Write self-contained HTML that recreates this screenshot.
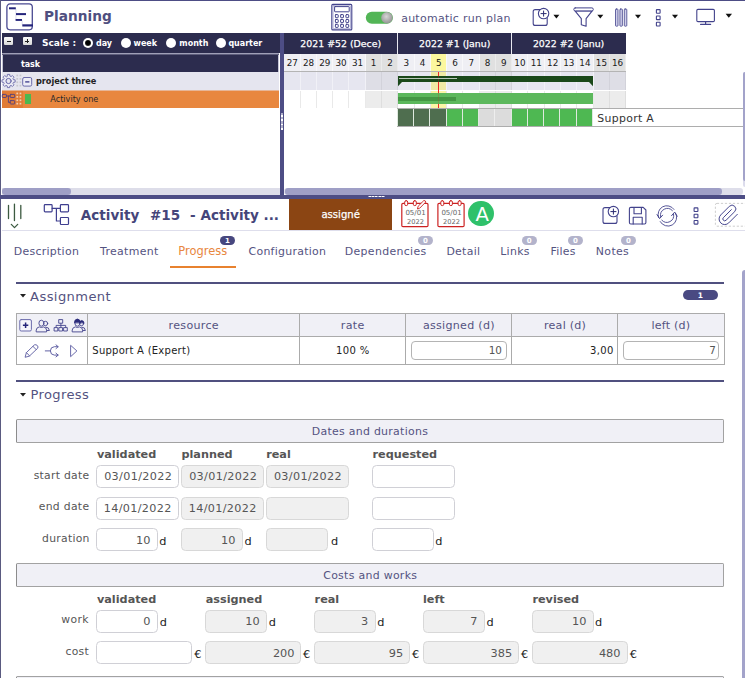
<!DOCTYPE html>
<html><head><meta charset="utf-8"><title>Planning</title>
<style>
html,body{margin:0;padding:0;}
body{width:745px;height:678px;overflow:hidden;position:relative;background:#fff;font-family:"DejaVu Sans","Liberation Sans",sans-serif;}
.a{position:absolute;}
.t{position:absolute;white-space:nowrap;line-height:1;}
svg{position:absolute;overflow:visible;}
</style></head><body>
<div class="a" style="left:0.00px;top:0.00px;width:745.00px;height:1.20px;background:#4d4d85;"></div>
<div class="a" style="left:0.00px;top:0.00px;width:1.30px;height:678.00px;background:#5a5a80;"></div>
<div class="a" style="left:2.00px;top:33.00px;width:278.00px;height:22.00px;background:#2c2c4e;"></div>
<div class="a" style="left:279.00px;top:53.00px;width:1.00px;height:56.00px;background:#fff;"></div>
<div class="a" style="left:2.00px;top:55.00px;width:277.00px;height:17.00px;background:#2c2c4e;"></div>
<div class="a" style="left:2.00px;top:53.00px;width:277.00px;height:1.00px;background:#a0a0b8;"></div>
<div class="a" style="left:2.00px;top:54.00px;width:277.00px;height:1.00px;background:#5e5e7c;"></div>
<div class="a" style="left:2.00px;top:55.00px;width:1.00px;height:17.00px;background:#c4c4d6;"></div>
<div class="a" style="left:278.00px;top:55.00px;width:1.00px;height:17.00px;background:#c4c4d6;"></div>
<div class="a" style="left:2.00px;top:72.00px;width:277.00px;height:19.00px;background:#e5e5ef;"></div>
<div class="a" style="left:2.00px;top:90.00px;width:277.00px;height:1.00px;background:#e7b697;"></div>
<div class="a" style="left:2.00px;top:91.00px;width:277.00px;height:17.00px;background:#e8873f;"></div>
<div class="a" style="left:2.00px;top:90.00px;width:21.00px;height:1.00px;background:#e3b193;"></div>
<div class="a" style="left:2.00px;top:91.00px;width:21.00px;height:17.00px;background:#e17c36;"></div>
<div class="a" style="left:24.80px;top:94.00px;width:6.70px;height:9.80px;background:#4cb850;"></div>
<div class="a" style="left:4.00px;top:36.90px;width:9.30px;height:8.20px;background:linear-gradient(#fbfbfb,#d9d9d9);border-radius:1px;"></div>
<div class="a" style="left:6.50px;top:40.50px;width:4.20px;height:1.10px;background:#222;"></div>
<div class="a" style="left:22.60px;top:36.90px;width:9.30px;height:8.20px;background:linear-gradient(#fbfbfb,#d9d9d9);border-radius:1px;"></div>
<div class="a" style="left:25.10px;top:40.50px;width:4.20px;height:1.10px;background:#222;"></div>
<div class="a" style="left:26.65px;top:38.90px;width:1.10px;height:4.30px;background:#222;"></div>
<div class="a" style="left:83.40px;top:37.7px;width:10px;height:10px;border-radius:50%;background:#fff;"></div>
<div class="a" style="left:85.30px;top:39.6px;width:6.2px;height:6.2px;border-radius:50%;background:radial-gradient(circle at 50% 45%,#000 40%,#555 100%);"></div>
<div class="a" style="left:121.00px;top:37.7px;width:10px;height:10px;border-radius:50%;background:#fff;"></div>
<div class="a" style="left:165.80px;top:37.7px;width:10px;height:10px;border-radius:50%;background:#fff;"></div>
<div class="a" style="left:216.00px;top:37.7px;width:10px;height:10px;border-radius:50%;background:#fff;"></div>
<div class="a" style="left:280.00px;top:32.90px;width:4.20px;height:162.00px;background:#4d4d85;"></div>
<div class="a" style="left:281.00px;top:113.20px;width:1.60px;height:16.80px;background:rgba(255,255,255,0.55);"></div>
<div class="a" style="left:281.00px;top:115.00px;width:1.60px;height:1.90px;background:#fff;"></div>
<div class="a" style="left:281.00px;top:119.30px;width:1.60px;height:1.90px;background:#fff;"></div>
<div class="a" style="left:281.00px;top:123.60px;width:1.60px;height:1.90px;background:#fff;"></div>
<div class="a" style="left:281.00px;top:127.90px;width:1.60px;height:1.90px;background:#fff;"></div>
<div class="a" style="left:283.90px;top:32.90px;width:341.90px;height:20.90px;background:#2c2c4e;"></div>
<div class="a" style="left:397.39px;top:32.90px;width:0.90px;height:20.90px;background:#e8e8f0;"></div>
<div class="a" style="left:511.28px;top:32.90px;width:0.90px;height:20.90px;background:#e8e8f0;"></div>
<div class="a" style="left:283.90px;top:53.70px;width:16.57px;height:17.80px;background:#efeff4;"></div>
<div class="a" style="left:283.90px;top:71.30px;width:16.57px;height:19.20px;background:#e6e6f0;"></div>
<div class="a" style="left:283.90px;top:90.50px;width:16.57px;height:17.70px;background:#fff;"></div>
<div class="a" style="left:300.17px;top:53.70px;width:16.57px;height:17.80px;background:#efeff4;"></div>
<div class="a" style="left:300.17px;top:71.30px;width:16.57px;height:19.20px;background:#e6e6f0;"></div>
<div class="a" style="left:300.17px;top:90.50px;width:16.57px;height:17.70px;background:#fff;"></div>
<div class="a" style="left:316.44px;top:53.70px;width:16.57px;height:17.80px;background:#efeff4;"></div>
<div class="a" style="left:316.44px;top:71.30px;width:16.57px;height:19.20px;background:#e6e6f0;"></div>
<div class="a" style="left:316.44px;top:90.50px;width:16.57px;height:17.70px;background:#fff;"></div>
<div class="a" style="left:332.71px;top:53.70px;width:16.57px;height:17.80px;background:#efeff4;"></div>
<div class="a" style="left:332.71px;top:71.30px;width:16.57px;height:19.20px;background:#e6e6f0;"></div>
<div class="a" style="left:332.71px;top:90.50px;width:16.57px;height:17.70px;background:#fff;"></div>
<div class="a" style="left:348.98px;top:53.70px;width:16.57px;height:17.80px;background:#efeff4;"></div>
<div class="a" style="left:348.98px;top:71.30px;width:16.57px;height:19.20px;background:#e6e6f0;"></div>
<div class="a" style="left:348.98px;top:90.50px;width:16.57px;height:17.70px;background:#fff;"></div>
<div class="a" style="left:365.25px;top:53.70px;width:16.57px;height:17.80px;background:#e0e0e0;"></div>
<div class="a" style="left:365.25px;top:71.30px;width:16.57px;height:19.20px;background:#dedee6;"></div>
<div class="a" style="left:365.25px;top:90.50px;width:16.57px;height:17.70px;background:#ececec;"></div>
<div class="a" style="left:381.52px;top:53.70px;width:16.57px;height:17.80px;background:#e0e0e0;"></div>
<div class="a" style="left:381.52px;top:71.30px;width:16.57px;height:19.20px;background:#dedee6;"></div>
<div class="a" style="left:381.52px;top:90.50px;width:16.57px;height:17.70px;background:#ececec;"></div>
<div class="a" style="left:397.79px;top:53.70px;width:16.57px;height:17.80px;background:#efeff4;"></div>
<div class="a" style="left:397.79px;top:71.30px;width:16.57px;height:19.20px;background:#e6e6f0;"></div>
<div class="a" style="left:397.79px;top:90.50px;width:16.57px;height:17.70px;background:#fff;"></div>
<div class="a" style="left:414.06px;top:53.70px;width:16.57px;height:17.80px;background:#efeff4;"></div>
<div class="a" style="left:414.06px;top:71.30px;width:16.57px;height:19.20px;background:#e6e6f0;"></div>
<div class="a" style="left:414.06px;top:90.50px;width:16.57px;height:17.70px;background:#fff;"></div>
<div class="a" style="left:430.33px;top:53.70px;width:16.57px;height:17.80px;background:#fcf79e;"></div>
<div class="a" style="left:430.33px;top:71.30px;width:16.57px;height:19.20px;background:#f0eaa4;"></div>
<div class="a" style="left:430.33px;top:90.50px;width:16.57px;height:17.70px;background:#fbf5a6;"></div>
<div class="a" style="left:446.60px;top:53.70px;width:16.57px;height:17.80px;background:#efeff4;"></div>
<div class="a" style="left:446.60px;top:71.30px;width:16.57px;height:19.20px;background:#e6e6f0;"></div>
<div class="a" style="left:446.60px;top:90.50px;width:16.57px;height:17.70px;background:#fff;"></div>
<div class="a" style="left:462.87px;top:53.70px;width:16.57px;height:17.80px;background:#efeff4;"></div>
<div class="a" style="left:462.87px;top:71.30px;width:16.57px;height:19.20px;background:#e6e6f0;"></div>
<div class="a" style="left:462.87px;top:90.50px;width:16.57px;height:17.70px;background:#fff;"></div>
<div class="a" style="left:479.14px;top:53.70px;width:16.57px;height:17.80px;background:#e0e0e0;"></div>
<div class="a" style="left:479.14px;top:71.30px;width:16.57px;height:19.20px;background:#dedee6;"></div>
<div class="a" style="left:479.14px;top:90.50px;width:16.57px;height:17.70px;background:#ececec;"></div>
<div class="a" style="left:495.41px;top:53.70px;width:16.57px;height:17.80px;background:#e0e0e0;"></div>
<div class="a" style="left:495.41px;top:71.30px;width:16.57px;height:19.20px;background:#dedee6;"></div>
<div class="a" style="left:495.41px;top:90.50px;width:16.57px;height:17.70px;background:#ececec;"></div>
<div class="a" style="left:511.68px;top:53.70px;width:16.57px;height:17.80px;background:#efeff4;"></div>
<div class="a" style="left:511.68px;top:71.30px;width:16.57px;height:19.20px;background:#e6e6f0;"></div>
<div class="a" style="left:511.68px;top:90.50px;width:16.57px;height:17.70px;background:#fff;"></div>
<div class="a" style="left:527.95px;top:53.70px;width:16.57px;height:17.80px;background:#efeff4;"></div>
<div class="a" style="left:527.95px;top:71.30px;width:16.57px;height:19.20px;background:#e6e6f0;"></div>
<div class="a" style="left:527.95px;top:90.50px;width:16.57px;height:17.70px;background:#fff;"></div>
<div class="a" style="left:544.22px;top:53.70px;width:16.57px;height:17.80px;background:#efeff4;"></div>
<div class="a" style="left:544.22px;top:71.30px;width:16.57px;height:19.20px;background:#e6e6f0;"></div>
<div class="a" style="left:544.22px;top:90.50px;width:16.57px;height:17.70px;background:#fff;"></div>
<div class="a" style="left:560.49px;top:53.70px;width:16.57px;height:17.80px;background:#efeff4;"></div>
<div class="a" style="left:560.49px;top:71.30px;width:16.57px;height:19.20px;background:#e6e6f0;"></div>
<div class="a" style="left:560.49px;top:90.50px;width:16.57px;height:17.70px;background:#fff;"></div>
<div class="a" style="left:576.76px;top:53.70px;width:16.57px;height:17.80px;background:#efeff4;"></div>
<div class="a" style="left:576.76px;top:71.30px;width:16.57px;height:19.20px;background:#e6e6f0;"></div>
<div class="a" style="left:576.76px;top:90.50px;width:16.57px;height:17.70px;background:#fff;"></div>
<div class="a" style="left:593.03px;top:53.70px;width:16.57px;height:17.80px;background:#e0e0e0;"></div>
<div class="a" style="left:593.03px;top:71.30px;width:16.57px;height:19.20px;background:#dedee6;"></div>
<div class="a" style="left:593.03px;top:90.50px;width:16.57px;height:17.70px;background:#ececec;"></div>
<div class="a" style="left:609.30px;top:53.70px;width:16.57px;height:17.80px;background:#e0e0e0;"></div>
<div class="a" style="left:609.30px;top:71.30px;width:16.57px;height:19.20px;background:#dedee6;"></div>
<div class="a" style="left:609.30px;top:90.50px;width:16.57px;height:17.70px;background:#ececec;"></div>
<div class="a" style="left:625.80px;top:53.00px;width:3.00px;height:56.00px;background:#fff;"></div>
<div class="a" style="left:300.00px;top:53.70px;width:1.00px;height:17.60px;background:#f8f8fa;"></div>
<div class="a" style="left:300.00px;top:71.30px;width:1.00px;height:19.20px;background:#f1f1f7;"></div>
<div class="a" style="left:300.00px;top:90.50px;width:1.00px;height:17.70px;background:#e9e9e9;"></div>
<div class="a" style="left:316.00px;top:53.70px;width:1.00px;height:17.60px;background:#f8f8fa;"></div>
<div class="a" style="left:316.00px;top:71.30px;width:1.00px;height:19.20px;background:#f1f1f7;"></div>
<div class="a" style="left:316.00px;top:90.50px;width:1.00px;height:17.70px;background:#e9e9e9;"></div>
<div class="a" style="left:332.00px;top:53.70px;width:1.00px;height:17.60px;background:#f8f8fa;"></div>
<div class="a" style="left:332.00px;top:71.30px;width:1.00px;height:19.20px;background:#f1f1f7;"></div>
<div class="a" style="left:332.00px;top:90.50px;width:1.00px;height:17.70px;background:#e9e9e9;"></div>
<div class="a" style="left:348.00px;top:53.70px;width:1.00px;height:17.60px;background:#f8f8fa;"></div>
<div class="a" style="left:348.00px;top:71.30px;width:1.00px;height:19.20px;background:#f1f1f7;"></div>
<div class="a" style="left:348.00px;top:90.50px;width:1.00px;height:17.70px;background:#e9e9e9;"></div>
<div class="a" style="left:365.00px;top:53.70px;width:1.00px;height:17.60px;background:#f8f8fa;"></div>
<div class="a" style="left:365.00px;top:71.30px;width:1.00px;height:19.20px;background:#f1f1f7;"></div>
<div class="a" style="left:365.00px;top:90.50px;width:1.00px;height:17.70px;background:#e9e9e9;"></div>
<div class="a" style="left:381.00px;top:53.70px;width:1.00px;height:17.60px;background:#ebebeb;"></div>
<div class="a" style="left:381.00px;top:71.30px;width:1.00px;height:19.20px;background:#d2d2da;"></div>
<div class="a" style="left:381.00px;top:90.50px;width:1.00px;height:17.70px;background:#dedede;"></div>
<div class="a" style="left:397.00px;top:53.70px;width:1.00px;height:17.60px;background:#ebebeb;"></div>
<div class="a" style="left:397.00px;top:71.30px;width:1.00px;height:19.20px;background:#d2d2da;"></div>
<div class="a" style="left:397.00px;top:90.50px;width:1.00px;height:17.70px;background:#dedede;"></div>
<div class="a" style="left:414.00px;top:53.70px;width:1.00px;height:17.60px;background:#f8f8fa;"></div>
<div class="a" style="left:414.00px;top:71.30px;width:1.00px;height:19.20px;background:#f1f1f7;"></div>
<div class="a" style="left:414.00px;top:90.50px;width:1.00px;height:17.70px;background:#e9e9e9;"></div>
<div class="a" style="left:430.00px;top:53.70px;width:1.00px;height:17.60px;background:#f8f8fa;"></div>
<div class="a" style="left:430.00px;top:71.30px;width:1.00px;height:19.20px;background:#f1f1f7;"></div>
<div class="a" style="left:430.00px;top:90.50px;width:1.00px;height:17.70px;background:#e9e9e9;"></div>
<div class="a" style="left:446.00px;top:53.70px;width:1.00px;height:17.60px;background:#f8f8fa;"></div>
<div class="a" style="left:446.00px;top:71.30px;width:1.00px;height:19.20px;background:#f1f1f7;"></div>
<div class="a" style="left:446.00px;top:90.50px;width:1.00px;height:17.70px;background:#e9e9e9;"></div>
<div class="a" style="left:462.00px;top:53.70px;width:1.00px;height:17.60px;background:#f8f8fa;"></div>
<div class="a" style="left:462.00px;top:71.30px;width:1.00px;height:19.20px;background:#f1f1f7;"></div>
<div class="a" style="left:462.00px;top:90.50px;width:1.00px;height:17.70px;background:#e9e9e9;"></div>
<div class="a" style="left:479.00px;top:53.70px;width:1.00px;height:17.60px;background:#f8f8fa;"></div>
<div class="a" style="left:479.00px;top:71.30px;width:1.00px;height:19.20px;background:#f1f1f7;"></div>
<div class="a" style="left:479.00px;top:90.50px;width:1.00px;height:17.70px;background:#e9e9e9;"></div>
<div class="a" style="left:495.00px;top:53.70px;width:1.00px;height:17.60px;background:#ebebeb;"></div>
<div class="a" style="left:495.00px;top:71.30px;width:1.00px;height:19.20px;background:#d2d2da;"></div>
<div class="a" style="left:495.00px;top:90.50px;width:1.00px;height:17.70px;background:#dedede;"></div>
<div class="a" style="left:511.00px;top:53.70px;width:1.00px;height:17.60px;background:#ebebeb;"></div>
<div class="a" style="left:511.00px;top:71.30px;width:1.00px;height:19.20px;background:#d2d2da;"></div>
<div class="a" style="left:511.00px;top:90.50px;width:1.00px;height:17.70px;background:#dedede;"></div>
<div class="a" style="left:527.00px;top:53.70px;width:1.00px;height:17.60px;background:#f8f8fa;"></div>
<div class="a" style="left:527.00px;top:71.30px;width:1.00px;height:19.20px;background:#f1f1f7;"></div>
<div class="a" style="left:527.00px;top:90.50px;width:1.00px;height:17.70px;background:#e9e9e9;"></div>
<div class="a" style="left:544.00px;top:53.70px;width:1.00px;height:17.60px;background:#f8f8fa;"></div>
<div class="a" style="left:544.00px;top:71.30px;width:1.00px;height:19.20px;background:#f1f1f7;"></div>
<div class="a" style="left:544.00px;top:90.50px;width:1.00px;height:17.70px;background:#e9e9e9;"></div>
<div class="a" style="left:560.00px;top:53.70px;width:1.00px;height:17.60px;background:#f8f8fa;"></div>
<div class="a" style="left:560.00px;top:71.30px;width:1.00px;height:19.20px;background:#f1f1f7;"></div>
<div class="a" style="left:560.00px;top:90.50px;width:1.00px;height:17.70px;background:#e9e9e9;"></div>
<div class="a" style="left:576.00px;top:53.70px;width:1.00px;height:17.60px;background:#f8f8fa;"></div>
<div class="a" style="left:576.00px;top:71.30px;width:1.00px;height:19.20px;background:#f1f1f7;"></div>
<div class="a" style="left:576.00px;top:90.50px;width:1.00px;height:17.70px;background:#e9e9e9;"></div>
<div class="a" style="left:593.00px;top:53.70px;width:1.00px;height:17.60px;background:#f8f8fa;"></div>
<div class="a" style="left:593.00px;top:71.30px;width:1.00px;height:19.20px;background:#f1f1f7;"></div>
<div class="a" style="left:593.00px;top:90.50px;width:1.00px;height:17.70px;background:#e9e9e9;"></div>
<div class="a" style="left:609.00px;top:53.70px;width:1.00px;height:17.60px;background:#ebebeb;"></div>
<div class="a" style="left:609.00px;top:71.30px;width:1.00px;height:19.20px;background:#d2d2da;"></div>
<div class="a" style="left:609.00px;top:90.50px;width:1.00px;height:17.70px;background:#dedede;"></div>
<div class="a" style="left:625.00px;top:53.70px;width:1.00px;height:17.60px;background:#ebebeb;"></div>
<div class="a" style="left:625.00px;top:71.30px;width:1.00px;height:19.20px;background:#d2d2da;"></div>
<div class="a" style="left:625.00px;top:90.50px;width:1.00px;height:17.70px;background:#dedede;"></div>
<div class="a" style="left:283.90px;top:71.10px;width:341.90px;height:0.90px;background:#b4b4b4;"></div>
<div class="a" style="left:438.10px;top:71.60px;width:1.10px;height:36.40px;background:#ee2a2a;"></div>
<div class="a" style="left:398.00px;top:76.00px;width:195.20px;height:5.90px;background:#1a481a;"></div>
<div class="a" style="left:438.10px;top:76.00px;width:1.10px;height:5.90px;background:rgba(238,42,42,0.22);"></div>
<svg class="a" style="left:398px;top:81.5px" width="4" height="4.2" viewBox="0 0 4 4.2"><path d="M0 0H4L0 4.2Z" fill="#1a481a"/></svg>
<svg class="a" style="left:589.2px;top:81.5px" width="4" height="4.2" viewBox="0 0 4 4.2"><path d="M0 0H4V4.2Z" fill="#1a481a"/></svg>
<div class="a" style="left:399.20px;top:77.80px;width:57.80px;height:1.30px;background:#b9c7b9;"></div>
<div class="a" style="left:398.00px;top:93.30px;width:195.20px;height:10.50px;background:#5cb85c;"></div>
<div class="a" style="left:398.30px;top:97.20px;width:58.00px;height:3.80px;background:rgba(40,110,40,0.45);"></div>
<div class="a" style="left:438.10px;top:93.30px;width:1.10px;height:10.50px;background:rgba(200,60,40,0.22);"></div>
<div class="a" style="left:397.30px;top:108.20px;width:345.70px;height:1.30px;background:#adadad;"></div>
<div class="a" style="left:397.30px;top:125.90px;width:345.70px;height:1.30px;background:#adadad;"></div>
<div class="a" style="left:397.19px;top:109.30px;width:16.47px;height:16.80px;background:#dfe9df;"></div>
<div class="a" style="left:397.79px;top:109.30px;width:15.27px;height:16.80px;background:#4f6e4f;"></div>
<div class="a" style="left:413.46px;top:109.30px;width:16.47px;height:16.80px;background:#dfe9df;"></div>
<div class="a" style="left:414.06px;top:109.30px;width:15.27px;height:16.80px;background:#4f6e4f;"></div>
<div class="a" style="left:429.73px;top:109.30px;width:16.47px;height:16.80px;background:#dfe9df;"></div>
<div class="a" style="left:430.33px;top:109.30px;width:15.27px;height:16.80px;background:#4f6e4f;"></div>
<div class="a" style="left:446.00px;top:109.30px;width:16.47px;height:16.80px;background:#dfe9df;"></div>
<div class="a" style="left:446.60px;top:109.30px;width:15.27px;height:16.80px;background:#4eb852;"></div>
<div class="a" style="left:462.27px;top:109.30px;width:16.47px;height:16.80px;background:#dfe9df;"></div>
<div class="a" style="left:462.87px;top:109.30px;width:15.27px;height:16.80px;background:#4eb852;"></div>
<div class="a" style="left:478.54px;top:109.30px;width:16.47px;height:16.80px;background:#eee;"></div>
<div class="a" style="left:479.14px;top:109.30px;width:15.27px;height:16.80px;background:#dcdcdc;"></div>
<div class="a" style="left:494.81px;top:109.30px;width:16.47px;height:16.80px;background:#eee;"></div>
<div class="a" style="left:495.41px;top:109.30px;width:15.27px;height:16.80px;background:#dcdcdc;"></div>
<div class="a" style="left:511.08px;top:109.30px;width:16.47px;height:16.80px;background:#dfe9df;"></div>
<div class="a" style="left:511.68px;top:109.30px;width:15.27px;height:16.80px;background:#4eb852;"></div>
<div class="a" style="left:527.35px;top:109.30px;width:16.47px;height:16.80px;background:#dfe9df;"></div>
<div class="a" style="left:527.95px;top:109.30px;width:15.27px;height:16.80px;background:#4eb852;"></div>
<div class="a" style="left:543.62px;top:109.30px;width:16.47px;height:16.80px;background:#dfe9df;"></div>
<div class="a" style="left:544.22px;top:109.30px;width:15.27px;height:16.80px;background:#4eb852;"></div>
<div class="a" style="left:559.89px;top:109.30px;width:16.47px;height:16.80px;background:#dfe9df;"></div>
<div class="a" style="left:560.49px;top:109.30px;width:15.27px;height:16.80px;background:#4eb852;"></div>
<div class="a" style="left:576.16px;top:109.30px;width:16.47px;height:16.80px;background:#dfe9df;"></div>
<div class="a" style="left:576.76px;top:109.30px;width:15.27px;height:16.80px;background:#4eb852;"></div>
<div class="a" style="left:1.80px;top:188.00px;width:278.20px;height:6.50px;background:#dddde9;"></div>
<div class="a" style="left:2.00px;top:188.00px;width:68.80px;height:6.50px;background:#9f9fc6;border-radius:3.2px;"></div>
<div class="a" style="left:283.90px;top:188.00px;width:459.10px;height:6.50px;background:#dedeea;border-radius:3.2px;"></div>
<div class="a" style="left:285.20px;top:188.00px;width:436.50px;height:6.50px;background:#9f9fc6;border-radius:3.2px;"></div>
<div class="a" style="left:743.10px;top:72.40px;width:2.00px;height:115.00px;background:#dcdcec;border-radius:2px 0 0 2px;"></div>
<div class="a" style="left:743.10px;top:72.40px;width:2.00px;height:108.60px;background:#a3a3ca;border-radius:2px 0 0 2px;"></div>
<div class="a" style="left:0.00px;top:194.70px;width:745.00px;height:4.10px;background:#4d4d85;"></div>
<div class="a" style="left:368.00px;top:196.10px;width:16.80px;height:1.40px;background:rgba(255,255,255,0.5);"></div>
<div class="a" style="left:368.60px;top:196.10px;width:2.10px;height:1.40px;background:#fff;"></div>
<div class="a" style="left:372.00px;top:196.10px;width:2.10px;height:1.40px;background:#fff;"></div>
<div class="a" style="left:375.40px;top:196.10px;width:2.10px;height:1.40px;background:#fff;"></div>
<div class="a" style="left:378.80px;top:196.10px;width:2.10px;height:1.40px;background:#fff;"></div>
<div class="a" style="left:382.20px;top:196.10px;width:2.10px;height:1.40px;background:#fff;"></div>
<div class="a" style="left:1.80px;top:230.20px;width:743.20px;height:0.90px;background:#dedeec;"></div>
<div class="a" style="left:289.40px;top:198.80px;width:102.60px;height:30.80px;background:#8b4513;"></div>
<div class="a" style="left:468.3px;top:200.8px;width:25.7px;height:25.7px;border-radius:50%;background:#2fc16a;"></div>
<div class="a" style="left:170.00px;top:266.20px;width:66.10px;height:1.80px;background:#e8822f;"></div>
<div class="a" style="left:220.10px;top:236.10px;width:15.20px;height:9.30px;background:#47477f;border-radius:4.65px;"></div>
<div class="a" style="left:417.80px;top:236.10px;width:15.40px;height:9.30px;background:#b3b3cb;border-radius:4.65px;"></div>
<div class="a" style="left:521.50px;top:236.10px;width:15.40px;height:9.30px;background:#b3b3cb;border-radius:4.65px;"></div>
<div class="a" style="left:568.00px;top:236.10px;width:15.40px;height:9.30px;background:#b3b3cb;border-radius:4.65px;"></div>
<div class="a" style="left:620.80px;top:236.10px;width:15.40px;height:9.30px;background:#b3b3cb;border-radius:4.65px;"></div>
<div class="a" style="left:683.20px;top:290.20px;width:34.60px;height:9.80px;background:#4a4a82;border-radius:4.90px;"></div>
<div class="a" style="left:16.20px;top:282.20px;width:708.20px;height:1.70px;background:#50507f;"></div>
<div class="a" style="left:16.20px;top:380.10px;width:708.20px;height:1.70px;background:#50507f;"></div>
<svg class="a" style="left:20.4px;top:294.3px" width="6" height="3.4" viewBox="0 0 6 3.4"><path d="M0 0H6L3 3.4Z" fill="#222"/></svg>
<svg class="a" style="left:20.4px;top:392.6px" width="6" height="3.4" viewBox="0 0 6 3.4"><path d="M0 0H6L3 3.4Z" fill="#222"/></svg>
<div class="a" style="left:16.40px;top:313.40px;width:708.20px;height:51.20px;background:#fff;box-sizing:border-box;border:1px solid #ababab;"></div>
<div class="a" style="left:17.40px;top:314.40px;width:706.20px;height:21.60px;background:#f0f0f6;"></div>
<div class="a" style="left:17.40px;top:335.90px;width:706.20px;height:0.90px;background:#ababab;"></div>
<div class="a" style="left:87.20px;top:313.40px;width:0.90px;height:51.20px;background:#ababab;"></div>
<div class="a" style="left:299.40px;top:313.40px;width:0.90px;height:51.20px;background:#ababab;"></div>
<div class="a" style="left:405.40px;top:313.40px;width:0.90px;height:51.20px;background:#ababab;"></div>
<div class="a" style="left:511.20px;top:313.40px;width:0.90px;height:51.20px;background:#ababab;"></div>
<div class="a" style="left:617.20px;top:313.40px;width:0.90px;height:51.20px;background:#ababab;"></div>
<div class="a" style="left:411.2px;top:340.8px;width:95.8px;height:19.6px;box-sizing:border-box;border:1px solid #b4b4b4;border-radius:4px;background:#fff;"></div>
<div class="a" style="left:623.3px;top:340.8px;width:95.4px;height:19.6px;box-sizing:border-box;border:1px solid #b4b4b4;border-radius:4px;background:#fff;"></div>
<div class="a" style="left:16.20px;top:418.70px;width:707.70px;height:23.90px;background:#f0f0f6;box-sizing:border-box;border:1.2px solid #a2a2a2;border-left-color:#8c8c8c;border-radius:1.5px;"></div>
<div class="a" style="left:16.20px;top:563.20px;width:707.70px;height:23.70px;background:#f0f0f6;box-sizing:border-box;border:1.2px solid #a2a2a2;border-left-color:#8c8c8c;border-radius:1.5px;"></div>
<div class="a" style="left:16.20px;top:675.90px;width:707.70px;height:6.00px;background:#f0f0f6;box-sizing:border-box;border:1.2px solid #a2a2a2;border-left-color:#8c8c8c;border-radius:1.5px;"></div>
<div class="a" style="left:96.30px;top:465.10px;width:83.20px;height:22.80px;box-sizing:border-box;border:1px solid #d0d0d6;border-radius:4.5px;background:#fff;"></div>
<div class="a" style="left:181.30px;top:465.10px;width:83.20px;height:22.80px;box-sizing:border-box;border:1px solid #d8d8d8;border-radius:4.5px;background:#f0f0f0;"></div>
<div class="a" style="left:266.10px;top:465.10px;width:83.20px;height:22.80px;box-sizing:border-box;border:1px solid #d8d8d8;border-radius:4.5px;background:#f0f0f0;"></div>
<div class="a" style="left:372.20px;top:465.10px;width:83.20px;height:22.80px;box-sizing:border-box;border:1px solid #d0d0d6;border-radius:4.5px;background:#fff;"></div>
<div class="a" style="left:96.30px;top:496.80px;width:83.20px;height:23.00px;box-sizing:border-box;border:1px solid #d0d0d6;border-radius:4.5px;background:#fff;"></div>
<div class="a" style="left:181.30px;top:496.80px;width:83.20px;height:23.00px;box-sizing:border-box;border:1px solid #d8d8d8;border-radius:4.5px;background:#f0f0f0;"></div>
<div class="a" style="left:266.10px;top:496.80px;width:83.20px;height:23.00px;box-sizing:border-box;border:1px solid #d8d8d8;border-radius:4.5px;background:#f0f0f0;"></div>
<div class="a" style="left:372.20px;top:496.80px;width:83.20px;height:23.00px;box-sizing:border-box;border:1px solid #d0d0d6;border-radius:4.5px;background:#fff;"></div>
<div class="a" style="left:96.30px;top:528.20px;width:61.70px;height:23.20px;box-sizing:border-box;border:1px solid #d0d0d6;border-radius:4.5px;background:#fff;"></div>
<div class="a" style="left:181.30px;top:528.20px;width:61.70px;height:23.20px;box-sizing:border-box;border:1px solid #d8d8d8;border-radius:4.5px;background:#f0f0f0;"></div>
<div class="a" style="left:266.10px;top:528.20px;width:61.70px;height:23.20px;box-sizing:border-box;border:1px solid #d8d8d8;border-radius:4.5px;background:#f0f0f0;"></div>
<div class="a" style="left:372.20px;top:528.20px;width:61.70px;height:23.20px;box-sizing:border-box;border:1px solid #d0d0d6;border-radius:4.5px;background:#fff;"></div>
<div class="a" style="left:96.30px;top:609.80px;width:61.80px;height:23.00px;box-sizing:border-box;border:1px solid #d0d0d6;border-radius:4.5px;background:#fff;"></div>
<div class="a" style="left:96.30px;top:641.10px;width:96.20px;height:23.40px;box-sizing:border-box;border:1px solid #d0d0d6;border-radius:4.5px;background:#fff;"></div>
<div class="a" style="left:205.30px;top:609.80px;width:61.80px;height:23.00px;box-sizing:border-box;border:1px solid #d8d8d8;border-radius:4.5px;background:#f0f0f0;"></div>
<div class="a" style="left:205.30px;top:641.10px;width:96.20px;height:23.40px;box-sizing:border-box;border:1px solid #d8d8d8;border-radius:4.5px;background:#f0f0f0;"></div>
<div class="a" style="left:314.30px;top:609.80px;width:61.80px;height:23.00px;box-sizing:border-box;border:1px solid #d8d8d8;border-radius:4.5px;background:#f0f0f0;"></div>
<div class="a" style="left:314.30px;top:641.10px;width:96.20px;height:23.40px;box-sizing:border-box;border:1px solid #d8d8d8;border-radius:4.5px;background:#f0f0f0;"></div>
<div class="a" style="left:423.30px;top:609.80px;width:61.80px;height:23.00px;box-sizing:border-box;border:1px solid #d8d8d8;border-radius:4.5px;background:#f0f0f0;"></div>
<div class="a" style="left:423.30px;top:641.10px;width:96.20px;height:23.40px;box-sizing:border-box;border:1px solid #d8d8d8;border-radius:4.5px;background:#f0f0f0;"></div>
<div class="a" style="left:532.30px;top:609.80px;width:61.80px;height:23.00px;box-sizing:border-box;border:1px solid #d8d8d8;border-radius:4.5px;background:#f0f0f0;"></div>
<div class="a" style="left:532.30px;top:641.10px;width:96.20px;height:23.40px;box-sizing:border-box;border:1px solid #d8d8d8;border-radius:4.5px;background:#f0f0f0;"></div>
<div class="a" style="left:741.70px;top:269.80px;width:3.40px;height:409.00px;background:#a3a3ca;border-radius:3px 0 0 0;"></div>
<svg class="a" style="left:0;top:0" width="745" height="678" viewBox="0 0 745 678" fill="none" stroke-linecap="round" stroke-linejoin="round">
<rect x="6.9" y="3.9" width="25.4" height="25.9" rx="3.2" stroke="#4a4a92" stroke-width="1.3" fill="#fff"/>
<path d="M15.9 9.3V14.1M15.9 15V20M22.2 20.8V24.3" stroke="#d4d4ea" stroke-width="0.8"/>
<rect x="9" y="7.3" width="6.8" height="2" fill="#25257c" stroke="none"/>
<rect x="16" y="13.1" width="10" height="2" fill="#25257c" stroke="none"/>
<rect x="15.6" y="19" width="6.4" height="1.9" fill="#25257c" stroke="none"/>
<rect x="22.3" y="24.3" width="10.6" height="2.2" fill="#25257c" stroke="none"/>
<rect x="331.8" y="4.4" width="20" height="25.5" rx="1" stroke="#43438c" stroke-width="1.1" fill="#f4f4fb"/>
<rect x="333.1" y="5.7" width="17.4" height="22.9" rx="0.6" stroke="#8c8cc0" stroke-width="0.6" fill="#fff"/>
<rect x="334.6" y="6.6" width="14.6" height="5.2" rx="0.5" stroke="#43438c" stroke-width="1" fill="#fff"/>
<rect x="335.40" y="14.60" width="2.8" height="3.1" rx="0.5" stroke="#43438c" stroke-width="1" fill="#fff"/>
<rect x="340.65" y="14.60" width="2.8" height="3.1" rx="0.5" stroke="#43438c" stroke-width="1" fill="#fff"/>
<rect x="345.90" y="14.60" width="2.8" height="3.1" rx="0.5" stroke="#43438c" stroke-width="1" fill="#fff"/>
<rect x="335.40" y="19.45" width="2.8" height="3.1" rx="0.5" stroke="#43438c" stroke-width="1" fill="#fff"/>
<rect x="340.65" y="19.45" width="2.8" height="3.1" rx="0.5" stroke="#43438c" stroke-width="1" fill="#fff"/>
<rect x="345.90" y="19.45" width="2.8" height="3.1" rx="0.5" stroke="#43438c" stroke-width="1" fill="#fff"/>
<rect x="335.40" y="24.30" width="2.8" height="3.1" rx="0.5" stroke="#43438c" stroke-width="1" fill="#fff"/>
<rect x="340.65" y="24.30" width="2.8" height="3.1" rx="0.5" stroke="#43438c" stroke-width="1" fill="#fff"/>
<rect x="345.90" y="24.30" width="2.8" height="3.1" rx="0.5" stroke="#43438c" stroke-width="1" fill="#fff"/>
<rect x="365.8" y="11.7" width="27.1" height="12" rx="6" fill="#52b556" stroke="none"/>
<defs><radialGradient id="kn" cx="45%" cy="40%" r="65%"><stop offset="0" stop-color="#d6d6d6"/><stop offset="1" stop-color="#8f8f8f"/></radialGradient></defs>
<circle cx="386.9" cy="17.7" r="5.7" fill="url(#kn)" stroke="none"/>
<path d="M553.4 14.8H559.4L556.4 18.5Z" fill="#111" stroke="none"/>
<path d="M597.3 14.8H603.3L600.3 18.5Z" fill="#111" stroke="none"/>
<path d="M635 14.8H641L638.0 18.5Z" fill="#111" stroke="none"/>
<path d="M672 14.8H678L675.0 18.5Z" fill="#111" stroke="none"/>
<path d="M725.6 13.7H732.0L728.8000000000001 17.7Z" fill="#111" stroke="none"/>
<path d="M540.70 9.60H535.20Q533.20 9.60 533.20 11.60V23.40Q533.20 25.40 535.20 25.40H545.20Q547.20 25.40 547.20 23.40V18.10" stroke="#43438c" stroke-width="1.1" fill="#fff"/>
<circle cx="543.60" cy="13.60" r="5.20" stroke="#43438c" stroke-width="1.1" fill="#fff"/>
<path d="M541.00 13.60H546.20M543.60 11.00V16.20" stroke="#2a2a70" stroke-width="1"/>
<path d="M575 10.9H592.2L586.1 18.6V26.3L581.3 24.7V18.6Z" stroke="#43438c" stroke-width="1.1" fill="#fff"/>
<rect x="573.8" y="7.9" width="19.5" height="3" rx="1.4" stroke="#43438c" stroke-width="1" fill="#fff"/>
<rect x="615.50" y="9" width="2.5" height="17.2" rx="0.8" stroke="#43438c" stroke-width="0.8" fill="#cfcfea"/>
<rect x="619.90" y="9" width="2.5" height="17.2" rx="0.8" stroke="#43438c" stroke-width="0.8" fill="#cfcfea"/>
<rect x="624.30" y="9" width="2.5" height="17.2" rx="0.8" stroke="#43438c" stroke-width="0.8" fill="#cfcfea"/>
<rect x="656.4" y="9.60" width="3.7" height="3.7" rx="0.5" stroke="#43438c" stroke-width="1.1" fill="#fff"/>
<rect x="656.4" y="15.95" width="3.7" height="3.7" rx="0.5" stroke="#43438c" stroke-width="1.1" fill="#fff"/>
<rect x="656.4" y="22.30" width="3.7" height="3.7" rx="0.5" stroke="#43438c" stroke-width="1.1" fill="#fff"/>
<rect x="696.8" y="9.4" width="17.6" height="12.2" rx="1.2" stroke="#43438c" stroke-width="1.1" fill="#fff"/>
<path d="M705.6 21.8V24M700.6 24.4H710.6" stroke="#43438c" stroke-width="1.2"/>
<path d="M7.24 76.07 L7.40 74.40 L9.70 74.40 L9.86 76.07 L11.11 76.59 L12.40 75.52 L14.03 77.15 L12.96 78.44 L13.48 79.69 L15.15 79.85 L15.15 82.15 L13.48 82.31 L12.96 83.56 L14.03 84.85 L12.40 86.48 L11.11 85.41 L9.86 85.93 L9.70 87.60 L7.40 87.60 L7.24 85.93 L5.99 85.41 L4.70 86.48 L3.07 84.85 L4.14 83.56 L3.62 82.31 L1.95 82.15 L1.95 79.85 L3.62 79.69 L4.14 78.44 L3.07 77.15 L4.70 75.52 L5.99 76.59Z" stroke="#6464a6" stroke-width="0.85" fill="#ececf5"/>
<circle cx="8.55" cy="81" r="2.6" stroke="#6464a6" stroke-width="1" fill="#e5e5ef"/>
<rect x="16.40" y="74.60" width="1.7" height="1.7" fill="#c6c6ce" stroke="none"/>
<rect x="16.40" y="92.60" width="1.7" height="1.7" fill="#f2cdb0" stroke="none"/>
<rect x="19.60" y="74.60" width="1.7" height="1.7" fill="#c6c6ce" stroke="none"/>
<rect x="19.60" y="92.60" width="1.7" height="1.7" fill="#f2cdb0" stroke="none"/>
<rect x="16.40" y="78.00" width="1.7" height="1.7" fill="#c6c6ce" stroke="none"/>
<rect x="16.40" y="96.00" width="1.7" height="1.7" fill="#f2cdb0" stroke="none"/>
<rect x="19.60" y="78.00" width="1.7" height="1.7" fill="#c6c6ce" stroke="none"/>
<rect x="19.60" y="96.00" width="1.7" height="1.7" fill="#f2cdb0" stroke="none"/>
<rect x="16.40" y="81.40" width="1.7" height="1.7" fill="#c6c6ce" stroke="none"/>
<rect x="16.40" y="99.40" width="1.7" height="1.7" fill="#f2cdb0" stroke="none"/>
<rect x="19.60" y="81.40" width="1.7" height="1.7" fill="#c6c6ce" stroke="none"/>
<rect x="19.60" y="99.40" width="1.7" height="1.7" fill="#f2cdb0" stroke="none"/>
<rect x="16.40" y="84.80" width="1.7" height="1.7" fill="#c6c6ce" stroke="none"/>
<rect x="16.40" y="102.80" width="1.7" height="1.7" fill="#f2cdb0" stroke="none"/>
<rect x="19.60" y="84.80" width="1.7" height="1.7" fill="#c6c6ce" stroke="none"/>
<rect x="19.60" y="102.80" width="1.7" height="1.7" fill="#f2cdb0" stroke="none"/>
<rect x="22.7" y="77.5" width="9" height="8.6" rx="1.5" stroke="#6a6aaa" stroke-width="1" fill="#ececf6"/>
<path d="M25.2 81.9H29.4" stroke="#3a3a8a" stroke-width="1.3" stroke-linecap="butt"/>
<rect x="2.3" y="94.4" width="4.1" height="3.1" rx="0.6" stroke="#54407e" stroke-width="0.9" fill="none"/>
<rect x="10.2" y="94.4" width="4.5" height="3.1" rx="0.6" stroke="#54407e" stroke-width="0.9" fill="none"/>
<rect x="10.2" y="100.6" width="4.5" height="3.4" rx="0.6" stroke="#54407e" stroke-width="0.9" fill="none"/>
<path d="M6.4 96H10.2M8.4 96V102.4H10.2" stroke="#54407e" stroke-width="0.9"/>
<rect x="44.30" y="204.70" width="7.80" height="7.10" rx="0.80" stroke="#3f3f8f" stroke-width="1.2" fill="#fff"/>
<rect x="60.40" y="204.70" width="8.10" height="7.10" rx="0.80" stroke="#3f3f8f" stroke-width="1.2" fill="#fff"/>
<rect x="60.40" y="217.50" width="8.10" height="7.00" rx="0.80" stroke="#3f3f8f" stroke-width="1.2" fill="#fff"/>
<path d="M52.10 208.30H60.40M56.40 208.30V221.00H60.40" stroke="#3f3f8f" stroke-width="1.2"/>
<path d="M8.5 205.3V218.6M14.45 204.1V220.6M20.8 205.3V218.6" stroke="#3c5a40" stroke-width="1.3"/>
<path d="M11.3 224.4L14.5 227.6L17.7 224.4" stroke="#3c5a40" stroke-width="1.3"/>
<rect x="401.80" y="203.3" width="26.20" height="23.4" rx="1.2" stroke="#cc2222" stroke-width="1.2" fill="#fff"/>
<rect x="404.70" y="200.7" width="3" height="4.9" rx="1.4" stroke="#cc2222" stroke-width="1" fill="#fff"/>
<rect x="413.30" y="200.7" width="3" height="4.9" rx="1.4" stroke="#cc2222" stroke-width="1" fill="#fff"/>
<path d="M417.50 208.6L418.20 206.2L423.80 200.6Q425.40 200.2 425.80 202L420.00 207.9Z" stroke="#cc2222" stroke-width="0.9" fill="#fff"/>
<rect x="437.90" y="203.3" width="26.20" height="23.4" rx="1.2" stroke="#cc2222" stroke-width="1.2" fill="#fff"/>
<rect x="440.80" y="200.7" width="3" height="4.9" rx="1.4" stroke="#cc2222" stroke-width="1" fill="#fff"/>
<rect x="449.40" y="200.7" width="3" height="4.9" rx="1.4" stroke="#cc2222" stroke-width="1" fill="#fff"/>
<rect x="458.10" y="200.7" width="3" height="4.9" rx="1.4" stroke="#cc2222" stroke-width="1" fill="#fff"/>
<path d="M610.50 207.60H605.00Q603.00 207.60 603.00 209.60V221.40Q603.00 223.40 605.00 223.40H615.00Q617.00 223.40 617.00 221.40V216.10" stroke="#43438c" stroke-width="1.1" fill="#fff"/>
<circle cx="613.40" cy="211.60" r="5.20" stroke="#43438c" stroke-width="1.1" fill="#fff"/>
<path d="M610.80 211.60H616.00M613.40 209.00V214.20" stroke="#2a2a70" stroke-width="1"/>
<path d="M630.8 207.4H643.2L645.9 210V222.6Q645.9 224 644.5 224H630.8Q629.4 224 629.4 222.6V208.8Q629.4 207.4 630.8 207.4Z" stroke="#43438c" stroke-width="1.1" fill="#fff"/>
<path d="M634 207.6V213.8H641.4V207.6M633.2 224V217.2H642.2V224" stroke="#43438c" stroke-width="1.1"/>
<path d="M658.6 217.6A8.8 8.8 0 0 1 674 209.4M675.6 213A8.8 8.8 0 0 1 660.2 221.6" stroke="#43438c" stroke-width="0.9"/>
<path d="M660.6 216.6A6.9 6.9 0 0 1 672.4 210.6M673.6 214.2A6.9 6.9 0 0 1 661.8 220.2" stroke="#43438c" stroke-width="0.9"/>
<path d="M657 214.6L659.6 218.6L662.6 215.2M671.6 215.6L674.6 212.2L677.2 216.2" stroke="#43438c" stroke-width="1"/>
<rect x="694.1" y="207.90" width="3.8" height="3.6" rx="0.5" stroke="#43438c" stroke-width="1.1" fill="#fff"/>
<rect x="694.1" y="214.20" width="3.8" height="3.6" rx="0.5" stroke="#43438c" stroke-width="1.1" fill="#fff"/>
<rect x="694.1" y="220.50" width="3.8" height="3.6" rx="0.5" stroke="#43438c" stroke-width="1.1" fill="#fff"/>
<rect x="715.4" y="203.4" width="32" height="22.8" rx="1.5" stroke="#c8c8c8" stroke-width="0.9" stroke-dasharray="2.2 1.8" stroke-linecap="butt"/>
<g transform="translate(717.2 203.9) scale(0.94)"><path d="M21.44 11.05l-9.19 9.19a6 6 0 0 1-8.49-8.49l9.19-9.19a4 4 0 0 1 5.66 5.66l-9.2 9.19a2 2 0 0 1-2.83-2.83l8.49-8.48" stroke="#43438c" stroke-width="1.05"/></g>
<rect x="19.8" y="319.6" width="11.6" height="11.4" rx="1.4" stroke="#6c6cac" stroke-width="1" fill="#f4f4fb"/>
<path d="M22.9 325.3H28.3M25.6 322.6V328" stroke="#23237a" stroke-width="1.5" stroke-linecap="butt"/>
<circle cx="45.50" cy="323.50" r="2.2" stroke="#43438c" stroke-width="0.9" fill="#f0f0f8"/>
<path d="M45.80 327.10Q49.20 327.10 49.40 330.50H46.70" stroke="#43438c" stroke-width="0.9"/>
<ellipse cx="41.40" cy="323.20" rx="2.5" ry="3" stroke="#43438c" stroke-width="0.9" fill="#f0f0f8"/>
<path d="M36.20 331.50V330.10Q36.50 327.30 39.40 326.9Q41.40 328.10 43.40 326.9Q46.40 327.30 46.60 330.10V331.50Z" stroke="#43438c" stroke-width="0.9" fill="#f0f0f8"/>
<circle cx="81.50" cy="323.50" r="2.2" stroke="#43438c" stroke-width="0.9" fill="#f0f0f8"/>
<path d="M81.80 327.10Q85.20 327.10 85.40 330.50H82.70" stroke="#43438c" stroke-width="0.9"/>
<ellipse cx="77.40" cy="323.20" rx="2.5" ry="3" stroke="#43438c" stroke-width="0.9" fill="#f0f0f8"/>
<path d="M72.20 331.50V330.10Q72.50 327.30 75.40 326.9Q77.40 328.10 79.40 326.9Q82.40 327.30 82.60 330.10V331.50Z" stroke="#43438c" stroke-width="0.9" fill="#f0f0f8"/>
<path d="M74.40 322.50Q74.60 319.10 77.40 319.00Q80.20 319.10 80.40 322.50Z" fill="#2b2b7a" stroke="#2b2b7a" stroke-width="0.8"/>
<path d="M79.80 322.50Q80.00 320.50 81.80 320.40Q83.80 320.50 84.00 322.70Z" fill="#2b2b7a" stroke="#2b2b7a" stroke-width="0.7"/>
<rect x="59.1" y="319.6" width="3.6" height="3.6" stroke="#43438c" stroke-width="0.9" fill="#f0f0f8"/>
<rect x="54.50" y="327.6" width="3.3" height="3.4" stroke="#43438c" stroke-width="0.9" fill="#f0f0f8"/>
<rect x="59.25" y="327.6" width="3.3" height="3.4" stroke="#43438c" stroke-width="0.9" fill="#f0f0f8"/>
<rect x="64.00" y="327.6" width="3.3" height="3.4" stroke="#43438c" stroke-width="0.9" fill="#f0f0f8"/>
<path d="M60.9 323.2V327.6M56.1 327.6V325.4H65.7V327.6" stroke="#43438c" stroke-width="0.9" stroke-linecap="butt"/>
<path d="M25.2 356.9L26.4 352.6L34.4 344.9Q36 344.2 37.4 345.6Q38.4 346.9 37.7 348.2L29.6 355.9Z M32.9 346.3L36.2 349.6M26.4 352.6L29.6 355.9" stroke="#5a5aa0" stroke-width="0.9" fill="#fff"/>
<path d="M45.3 350.9H50.2M58 346.7H54.4Q50.4 346.9 50.4 350.9Q50.4 354.9 54.4 355.1H58M56 344.9L58.2 346.7L56 348.6M56 353.2L58.2 355.1L56 356.9" stroke="#5a5aa0" stroke-width="0.95"/>
<path d="M70.6 345.7V356.7L76.6 351.2Z" stroke="#5a5aa0" stroke-width="0.9" fill="#fff"/>
</svg>
<span class="t" style="left:44.07px;top:9.68px;font-size:13.68px;color:#4f4f80;font-weight:bold;">Planning</span>
<span class="t" style="left:401.14px;top:12.71px;font-size:10.98px;color:#545381;letter-spacing:0.286px;">automatic run plan</span>
<span class="t" style="left:41.89px;top:39.30px;font-size:9.10px;color:#fff;font-weight:bold;">Scale :</span>
<span class="t" style="left:95.96px;top:38.77px;font-size:8.90px;color:#fff;font-weight:bold;font-family:'DejaVu Sans Condensed','DejaVu Sans',sans-serif;">day</span>
<span class="t" style="left:133.58px;top:38.77px;font-size:8.90px;color:#fff;font-weight:bold;font-family:'DejaVu Sans Condensed','DejaVu Sans',sans-serif;">week</span>
<span class="t" style="left:179.36px;top:38.77px;font-size:8.90px;color:#fff;font-weight:bold;font-family:'DejaVu Sans Condensed','DejaVu Sans',sans-serif;">month</span>
<span class="t" style="left:228.40px;top:38.77px;font-size:8.90px;color:#fff;font-weight:bold;font-family:'DejaVu Sans Condensed','DejaVu Sans',sans-serif;">quarter</span>
<span class="t" style="left:20.90px;top:59.87px;font-size:8.90px;color:#fff;font-weight:bold;font-family:'DejaVu Sans Condensed','DejaVu Sans',sans-serif;">task</span>
<span class="t" style="left:300.37px;top:39.05px;font-size:9.40px;color:#fff;-webkit-text-stroke:0.25px #fff;">2021 #52 (Dece)</span>
<span class="t" style="left:419.01px;top:39.05px;font-size:9.40px;color:#fff;-webkit-text-stroke:0.25px #fff;">2022 #1 (Janu)</span>
<span class="t" style="left:532.90px;top:39.05px;font-size:9.40px;color:#fff;-webkit-text-stroke:0.25px #fff;">2022 #2 (Janu)</span>
<span class="t" style="left:286.76px;top:58.86px;font-size:8.80px;color:#1a1a1a;">27</span>
<span class="t" style="left:302.99px;top:58.86px;font-size:8.80px;color:#1a1a1a;">28</span>
<span class="t" style="left:319.26px;top:58.86px;font-size:8.80px;color:#1a1a1a;">29</span>
<span class="t" style="left:335.53px;top:58.86px;font-size:8.80px;color:#1a1a1a;">30</span>
<span class="t" style="left:351.89px;top:58.86px;font-size:8.80px;color:#1a1a1a;">31</span>
<span class="t" style="left:370.82px;top:58.86px;font-size:8.80px;color:#1a1a1a;">1</span>
<span class="t" style="left:387.27px;top:58.86px;font-size:8.80px;color:#1a1a1a;">2</span>
<span class="t" style="left:403.45px;top:58.86px;font-size:8.80px;color:#1a1a1a;">3</span>
<span class="t" style="left:419.72px;top:58.86px;font-size:8.80px;color:#1a1a1a;">4</span>
<span class="t" style="left:436.04px;top:58.86px;font-size:8.80px;color:#1a1a1a;">5</span>
<span class="t" style="left:452.22px;top:58.86px;font-size:8.80px;color:#1a1a1a;">6</span>
<span class="t" style="left:468.49px;top:58.86px;font-size:8.80px;color:#1a1a1a;">7</span>
<span class="t" style="left:484.80px;top:58.86px;font-size:8.80px;color:#1a1a1a;">8</span>
<span class="t" style="left:501.07px;top:58.86px;font-size:8.80px;color:#1a1a1a;">9</span>
<span class="t" style="left:514.37px;top:58.86px;font-size:8.80px;color:#1a1a1a;">10</span>
<span class="t" style="left:530.73px;top:58.86px;font-size:8.80px;color:#1a1a1a;">11</span>
<span class="t" style="left:547.04px;top:58.86px;font-size:8.80px;color:#1a1a1a;">12</span>
<span class="t" style="left:563.22px;top:58.86px;font-size:8.80px;color:#1a1a1a;">13</span>
<span class="t" style="left:579.36px;top:58.86px;font-size:8.80px;color:#1a1a1a;">14</span>
<span class="t" style="left:595.81px;top:58.86px;font-size:8.80px;color:#1a1a1a;">15</span>
<span class="t" style="left:611.94px;top:58.86px;font-size:8.80px;color:#1a1a1a;">16</span>
<span class="t" style="left:35.94px;top:76.81px;font-size:8.20px;color:#222;font-weight:bold;">project three</span>
<span class="t" style="left:50.30px;top:95.43px;font-size:8.12px;color:#2a2a2a;">Activity one</span>
<span class="t" style="left:597.35px;top:113.78px;font-size:10.90px;color:#333;letter-spacing:0.314px;">Support A</span>
<span class="t" style="left:80.80px;top:209.29px;font-size:13.55px;color:#45457a;font-weight:bold;">Activity</span>
<span class="t" style="left:149.98px;top:209.29px;font-size:13.55px;color:#45457a;font-weight:bold;">#15</span>
<span class="t" style="left:190.12px;top:209.29px;font-size:13.55px;color:#45457a;font-weight:bold;">- Activity ...</span>
<span class="t" style="left:321.45px;top:210.47px;font-size:10.08px;color:#fff;-webkit-text-stroke:0.25px #fff;">assigné</span>
<span class="t" style="left:405.38px;top:209.36px;font-size:7.02px;color:#666;">05/01</span>
<span class="t" style="left:407.03px;top:218.75px;font-size:6.68px;color:#666;">2022</span>
<span class="t" style="left:441.38px;top:209.36px;font-size:7.02px;color:#666;">05/01</span>
<span class="t" style="left:443.03px;top:218.75px;font-size:6.68px;color:#666;">2022</span>
<span class="t" style="left:475.60px;top:204.73px;font-size:19.71px;color:#fff;">A</span>
<span class="t" style="left:13.78px;top:246.75px;font-size:10.93px;color:#545381;letter-spacing:0.284px;">Description</span>
<span class="t" style="left:100.05px;top:246.75px;font-size:10.93px;color:#545381;letter-spacing:0.327px;">Treatment</span>
<span class="t" style="left:178.29px;top:246.31px;font-size:11.45px;color:#e8873f;">Progress</span>
<span class="t" style="left:248.52px;top:246.75px;font-size:10.93px;color:#545381;letter-spacing:0.285px;">Configuration</span>
<span class="t" style="left:344.82px;top:246.75px;font-size:10.93px;color:#545381;letter-spacing:0.327px;">Dependencies</span>
<span class="t" style="left:446.42px;top:246.75px;font-size:10.93px;color:#545381;letter-spacing:0.285px;">Detail</span>
<span class="t" style="left:500.18px;top:246.75px;font-size:10.93px;color:#545381;letter-spacing:0.314px;">Links</span>
<span class="t" style="left:550.38px;top:246.75px;font-size:10.93px;color:#545381;letter-spacing:0.266px;">Files</span>
<span class="t" style="left:595.83px;top:246.75px;font-size:10.93px;color:#545381;letter-spacing:0.355px;">Notes</span>
<span class="t" style="left:225.11px;top:238.08px;font-size:7.00px;color:#fff;font-weight:bold;">1</span>
<span class="t" style="left:423.08px;top:238.08px;font-size:7.00px;color:#fff;font-weight:bold;">0</span>
<span class="t" style="left:526.79px;top:238.08px;font-size:7.00px;color:#fff;font-weight:bold;">0</span>
<span class="t" style="left:573.09px;top:238.08px;font-size:7.00px;color:#fff;font-weight:bold;">0</span>
<span class="t" style="left:626.09px;top:238.08px;font-size:7.00px;color:#fff;font-weight:bold;">0</span>
<span class="t" style="left:697.73px;top:291.85px;font-size:7.50px;color:#fff;font-weight:bold;">1</span>
<span class="t" style="left:30.07px;top:290.18px;font-size:13.08px;color:#545381;letter-spacing:0.402px;">Assignment</span>
<span class="t" style="left:30.49px;top:388.18px;font-size:13.08px;color:#545381;letter-spacing:0.364px;">Progress</span>
<span class="t" style="left:168.58px;top:320.13px;font-size:11.08px;color:#545381;letter-spacing:0.312px;">resource</span>
<span class="t" style="left:340.76px;top:320.13px;font-size:11.08px;color:#545381;letter-spacing:0.33px;">rate</span>
<span class="t" style="left:422.90px;top:320.13px;font-size:11.08px;color:#545381;letter-spacing:0.287px;">assigned (d)</span>
<span class="t" style="left:543.95px;top:320.13px;font-size:11.08px;color:#545381;letter-spacing:0.258px;">real (d)</span>
<span class="t" style="left:651.40px;top:320.13px;font-size:11.08px;color:#545381;letter-spacing:0.237px;">left (d)</span>
<span class="t" style="left:92.28px;top:346.01px;font-size:10.03px;color:#222;letter-spacing:0.255px;">Support A (Expert)</span>
<span class="t" style="left:335.98px;top:346.01px;font-size:10.03px;color:#222;letter-spacing:0.358px;">100 %</span>
<span class="t" style="left:488.66px;top:344.70px;font-size:10.40px;color:#555;">10</span>
<span class="t" style="left:589.97px;top:346.01px;font-size:10.03px;color:#222;letter-spacing:0.329px;">3,00</span>
<span class="t" style="left:709.28px;top:344.70px;font-size:10.40px;color:#555;">7</span>
<span class="t" style="left:311.74px;top:426.75px;font-size:10.93px;color:#545381;letter-spacing:0.287px;">Dates and durations</span>
<span class="t" style="left:323.21px;top:571.05px;font-size:10.93px;color:#545381;letter-spacing:0.299px;">Costs and works</span>
<span class="t" style="left:96.95px;top:449.48px;font-size:11.25px;color:#555;font-weight:bold;">validated</span>
<span class="t" style="left:181.38px;top:449.48px;font-size:11.25px;color:#555;font-weight:bold;">planned</span>
<span class="t" style="left:266.20px;top:449.48px;font-size:11.25px;color:#555;font-weight:bold;">real</span>
<span class="t" style="left:372.54px;top:449.48px;font-size:11.25px;color:#555;font-weight:bold;">requested</span>
<span class="t" style="left:33.74px;top:471.17px;font-size:10.79px;color:#555;letter-spacing:0.272px;">start date</span>
<span class="t" style="left:38.78px;top:502.07px;font-size:10.79px;color:#555;letter-spacing:0.317px;">end date</span>
<span class="t" style="left:42.02px;top:534.17px;font-size:10.79px;color:#555;letter-spacing:0.296px;">duration</span>
<span class="t" style="left:104.13px;top:471.12px;font-size:11.20px;color:#555;letter-spacing:0.36px;">03/01/2022</span>
<span class="t" style="left:189.13px;top:471.12px;font-size:11.20px;color:#555;letter-spacing:0.36px;">03/01/2022</span>
<span class="t" style="left:273.88px;top:471.12px;font-size:11.20px;color:#555;letter-spacing:0.36px;">03/01/2022</span>
<span class="t" style="left:103.68px;top:502.62px;font-size:11.20px;color:#555;letter-spacing:0.36px;">14/01/2022</span>
<span class="t" style="left:188.68px;top:502.62px;font-size:11.20px;color:#555;letter-spacing:0.36px;">14/01/2022</span>
<span class="t" style="left:136.07px;top:534.84px;font-size:11.30px;color:#555;">10</span>
<span class="t" style="left:221.07px;top:534.84px;font-size:11.30px;color:#555;">10</span>
<span class="t" style="left:159.24px;top:536.44px;font-size:11.30px;color:#222;">d</span>
<span class="t" style="left:244.49px;top:536.44px;font-size:11.30px;color:#222;">d</span>
<span class="t" style="left:330.99px;top:536.44px;font-size:11.30px;color:#222;">d</span>
<span class="t" style="left:435.24px;top:536.44px;font-size:11.30px;color:#222;">d</span>
<span class="t" style="left:96.95px;top:593.68px;font-size:11.25px;color:#555;font-weight:bold;">validated</span>
<span class="t" style="left:205.66px;top:593.68px;font-size:11.25px;color:#555;font-weight:bold;">assigned</span>
<span class="t" style="left:314.58px;top:593.68px;font-size:11.25px;color:#555;font-weight:bold;">real</span>
<span class="t" style="left:422.90px;top:593.68px;font-size:11.25px;color:#555;font-weight:bold;">left</span>
<span class="t" style="left:532.38px;top:593.68px;font-size:11.25px;color:#555;font-weight:bold;">revised</span>
<span class="t" style="left:61.26px;top:615.37px;font-size:10.79px;color:#555;letter-spacing:0.404px;">work</span>
<span class="t" style="left:65.43px;top:646.87px;font-size:10.79px;color:#555;letter-spacing:0.339px;">cost</span>
<span class="t" style="left:143.26px;top:616.14px;font-size:11.30px;color:#555;">0</span>
<span class="t" style="left:245.32px;top:616.14px;font-size:11.30px;color:#555;">10</span>
<span class="t" style="left:361.12px;top:616.14px;font-size:11.30px;color:#555;">3</span>
<span class="t" style="left:470.37px;top:616.14px;font-size:11.30px;color:#555;">7</span>
<span class="t" style="left:572.07px;top:616.14px;font-size:11.30px;color:#555;">10</span>
<span class="t" style="left:159.79px;top:616.74px;font-size:11.30px;color:#222;">d</span>
<span class="t" style="left:268.79px;top:616.74px;font-size:11.30px;color:#222;">d</span>
<span class="t" style="left:377.29px;top:616.74px;font-size:11.30px;color:#222;">d</span>
<span class="t" style="left:486.54px;top:616.74px;font-size:11.30px;color:#222;">d</span>
<span class="t" style="left:595.03px;top:616.74px;font-size:11.30px;color:#222;">d</span>
<span class="t" style="left:272.88px;top:647.94px;font-size:11.30px;color:#555;">200</span>
<span class="t" style="left:388.80px;top:647.94px;font-size:11.30px;color:#555;">95</span>
<span class="t" style="left:490.61px;top:647.94px;font-size:11.30px;color:#555;">385</span>
<span class="t" style="left:598.88px;top:647.94px;font-size:11.30px;color:#555;">480</span>
<span class="t" style="left:194.15px;top:649.24px;font-size:11.30px;color:#222;">€</span>
<span class="t" style="left:302.90px;top:649.24px;font-size:11.30px;color:#222;">€</span>
<span class="t" style="left:411.90px;top:649.24px;font-size:11.30px;color:#222;">€</span>
<span class="t" style="left:520.90px;top:649.24px;font-size:11.30px;color:#222;">€</span>
<span class="t" style="left:629.70px;top:649.24px;font-size:11.30px;color:#222;">€</span>
</body></html>
